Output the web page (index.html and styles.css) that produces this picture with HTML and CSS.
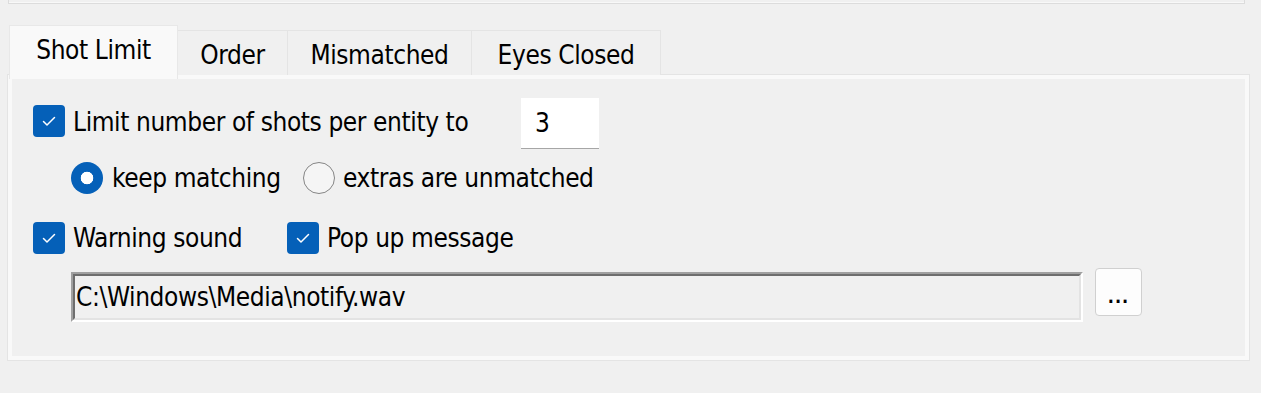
FILE: index.html
```html
<!DOCTYPE html>
<html>
<head>
<meta charset="utf-8">
<link rel="stylesheet" href="styles.css">
</head>
<body>
<div class="topbox"></div>
<div class="tabs">
  <div class="tab active" style="width:169px">Shot Limit</div>
  <div class="tab" style="width:110px">Order</div>
  <div class="tab" style="width:184px">Mismatched</div>
  <div class="tab" style="width:189px">Eyes Closed</div>
</div>
<div class="panel">
  <div class="row row1">
    <span class="check"><svg viewBox="0 0 32 32" width="32" height="32"><path d="M10.5 16.5 L14 20 L21.5 12.5" fill="none" stroke="#fff" stroke-width="1.5" stroke-linecap="round" stroke-linejoin="round"/></svg></span>
    <span class="label limit-label">Limit number of shots per entity to</span>
    <div class="numbox">3</div>
  </div>
  <div class="row row2">
    <span class="radio on"></span>
    <span class="label keep-label">keep matching</span>
    <span class="radio off"></span>
    <span class="label">extras are unmatched</span>
  </div>
  <div class="row row3">
    <span class="check"><svg viewBox="0 0 32 32" width="32" height="32"><path d="M10.5 16.5 L14 20 L21.5 12.5" fill="none" stroke="#fff" stroke-width="1.5" stroke-linecap="round" stroke-linejoin="round"/></svg></span>
    <span class="label warn-label">Warning sound</span>
    <span class="check"><svg viewBox="0 0 32 32" width="32" height="32"><path d="M10.5 16.5 L14 20 L21.5 12.5" fill="none" stroke="#fff" stroke-width="1.5" stroke-linecap="round" stroke-linejoin="round"/></svg></span>
    <span class="label">Pop up message</span>
  </div>
  <div class="row row4">
    <div class="pathfield"><div class="pathinner">C:\Windows\Media\notify.wav</div></div>
    <div class="browse">...</div>
  </div>
</div>
</body>
</html>
```
FILE: styles.css
```css
* { box-sizing: border-box; }
html, body { margin: 0; padding: 0; }
body {
  background: #f0f0f0;
  font-family: "DejaVu Sans Condensed", "DejaVu Sans", sans-serif;
  font-size: 26px;
  letter-spacing: -0.4px;
  color: #000;
  width: 1261px;
  height: 393px;
  overflow: hidden;
}
.topbox {
  margin: 0 16px 0 8px;
  height: 4px;
  border: 1px solid #dcdcdc;
  border-top: none;
  box-shadow: inset 0 -1px 0 #f8f8f8;
}
.tabs {
  display: flex;
  align-items: flex-end;
  margin-top: 21px;
  padding-left: 9px;
  height: 50px;
  position: relative;
  z-index: 2;
}
.tab {
  height: 45px;
  display: flex;
  align-items: center;
  justify-content: center;
  background: #f0f0f0;
  border: 1px solid #e4e4e4;
  border-bottom: none;
  border-left: none;
  padding-top: 4px;
}
.tab.active {
  height: 54px;
  margin-bottom: -4px;
  background: #f9f9f9;
  border: 1px solid #e8e8e8;
  border-bottom: none;
  padding-top: 0;
  padding-bottom: 6px;
}
.panel {
  margin: 0 12px 0 8px;
  height: 285px;
  border: 4px solid #f9f9f9;
  box-shadow: 0 0 0 1px #e4e4e4;
  padding: 19px 0 0 21px;
  position: relative;
  z-index: 1;
}
.row {
  display: flex;
  align-items: center;
}
.label { white-space: nowrap; }
.row1 { height: 51px; }
.row1 .check { margin-top: -6px; }
.row1 .label { margin-top: -4px; }
.check {
  width: 32px;
  height: 32px;
  border-radius: 4px;
  background: #0560b8;
  flex: none;
  display: block;
  margin-right: 8px;
}
.check svg { display: block; }
.limit-label { width: 448px; }
.numbox {
  width: 78px;
  height: 51px;
  background: #fff;
  border-bottom: 1px solid #a6a6a6;
  padding-left: 14px;
  display: flex;
  align-items: center;
}
.row2 {
  margin-top: 13px;
  padding-left: 38px;
  height: 32px;
}
.radio {
  width: 32px;
  height: 32px;
  border-radius: 50%;
  flex: none;
  margin-right: 9px;
}
.radio.on {
  background: radial-gradient(circle, #fff 0 6px, #0560b8 6.6px);
}
.keep-label { width: 191px; }
.radio.off {
  border: 1.3px solid #858585;
  background: #f5f5f5;
  margin-right: 8px;
}
.row3 {
  margin-top: 28px;
  height: 32px;
}
.warn-label { width: 214px; }
.row4 {
  margin-top: 14px;
  padding-left: 38px;
  align-items: flex-start;
}
.pathfield {
  margin-top: 4px;
  width: 1012px;
  height: 50px;
  border-style: solid;
  border-width: 2px;
  border-color: #a0a0a0 #ffffff #ffffff #a0a0a0;
}
.pathinner {
  height: 100%;
  border-style: solid;
  border-width: 2px;
  border-color: #6e6e6e #e3e3e3 #e3e3e3 #6e6e6e;
  background: #f0f0f0;
  padding-left: 1px;
  display: flex;
  align-items: center;
  white-space: nowrap;
}
.browse {
  margin-left: 12px;
  width: 47px;
  height: 48px;
  background: #fdfdfd;
  border: 1px solid #d0d0d0;
  border-radius: 4px;
  display: flex;
  align-items: center;
  justify-content: center;
  font-weight: bold;
  font-size: 18px;
  letter-spacing: 1px;
  padding-top: 8px;
}
```
